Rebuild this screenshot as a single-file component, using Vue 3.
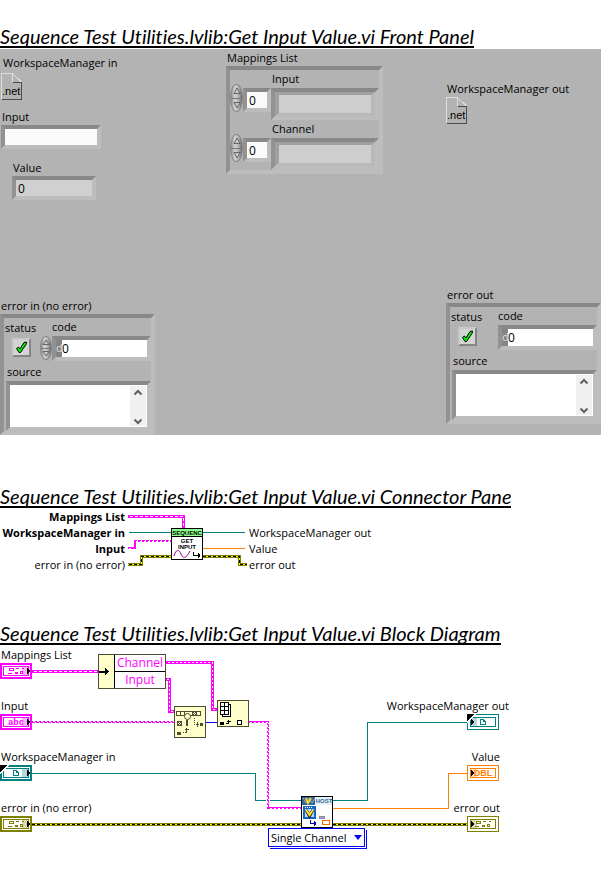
<script setup>
import { ref } from 'vue'

const inputText = ref('')
const subset = ref('Single Channel')

const mappingRows = ref([
  { id: 'map-input', name: 'Input', index: 0 },
  { id: 'map-channel', name: 'Channel', index: 0 },
])

const errorIn = ref({ id: 'ein', title: 'error in (no error)', control: true, ok: true, code: '0', source: '' })
const errorOut = ref({ id: 'eout', title: 'error out', control: false, ok: true, code: '0', source: '' })

const leftPins = [
  { text: 'Mappings List', required: true },
  { text: 'WorkspaceManager in', required: true },
  { text: 'Input', required: true },
  { text: 'error in (no error)', required: false },
]
const rightPins = ['WorkspaceManager out', 'Value', 'error out']

const PINK = '#ff00ff'
const TEAL = '#008080'
const OLIVE = '#808000'
const ORANGE = '#ff8000'

const terminals = [
  { label: 'Mappings List', x: 0, y: 663, lx: 1, anchor: 'start', color: PINK, kind: 'cluster', out: false },
  { label: 'Input', x: 0, y: 714, lx: 1, anchor: 'start', color: PINK, kind: 'abc', out: false },
  { label: 'WorkspaceManager in', x: 0, y: 765, lx: 1, anchor: 'start', color: TEAL, kind: 'ref', out: false },
  { label: 'error in (no error)', x: 0, y: 816, lx: 1, anchor: 'start', color: OLIVE, kind: 'cluster', out: false },
  { label: 'WorkspaceManager out', x: 467, y: 714, lx: 509, anchor: 'end', color: TEAL, kind: 'ref', out: true },
  { label: 'Value', x: 467, y: 765, lx: 500, anchor: 'end', color: ORANGE, kind: 'DBL', out: true },
  { label: 'error out', x: 467, y: 816, lx: 500, anchor: 'end', color: OLIVE, kind: 'cluster', out: true },
]

function step(row, by) {
  row.index = Math.max(0, Number(row.index) + by)
}
function stepCode(c, by) {
  c.code = String(Number(c.code) + by)
}
</script>

<template>
  <main class="doc">
    <h2 class="title">Sequence Test Utilities.lvlib:Get Input Value.vi Front Panel</h2>
    <section class="panel">
      <div class="col left">
        <div class="lbl in3">WorkspaceManager in</div>
        <svg class="net" width="21" height="27" viewBox="0 0 21 27" shape-rendering="crispEdges">
          <path d="M.5 26V.5H11.5L20.5 9" fill="none" stroke="#dedede" />
          <path d="M11.500 9.500H20.5V26.500H.5" fill="none" stroke="#4c4c4c" />
          <path d="M11.500 1V9" stroke="#dedede" />
          <text x="1" y="22" class="nettext">.net</text>
        </svg>
        <label class="lbl in2 gap-a" for="fp-input">Input</label>
        <input id="fp-input" v-model="inputText" class="sunk field wide in1" type="text" />
        <label class="lbl in13 gap-b" for="fp-value">Value</label>
        <input id="fp-value" class="sunk field readout in12" type="text" value="0" readonly />
      </div>

      <div class="col mid">
        <div class="lbl in1">Mappings List</div>
        <div class="sunk maps">
          <div v-for="row in mappingRows" :key="row.id" class="maprow">
            <label class="lbl maplbl" :for="row.id">{{ row.name }}</label>
            <div class="mapline">
              <span class="spin tall">
                <button type="button" :aria-label="row.name + ' up'" @click="step(row, 1)">
                  <svg width="8" height="8" viewBox="0 0 8 8"><path d="M1 6.500L4 1 7 6.500Z" fill="#c8c8c8" stroke="#666" /></svg>
                </button>
                <button type="button" :aria-label="row.name + ' down'" @click="step(row, -1)">
                  <svg width="8" height="8" viewBox="0 0 8 8"><path d="M1 1.500L4 7 7 1.500Z" fill="#c8c8c8" stroke="#666" /></svg>
                </button>
              </span>
              <input v-model="row.index" class="sunk field idx" type="text" :aria-label="row.name + ' index'" />
              <span class="sunk outer">
                <input :id="row.id" class="sunk field inner" type="text" readonly />
              </span>
            </div>
          </div>
        </div>
      </div>

      <div class="col right">
        <div class="lbl in1">WorkspaceManager out</div>
        <svg width="21" height="27" viewBox="0 0 21 27" shape-rendering="crispEdges">
          <path d="M.5 26V.5H11.5L20.5 9" fill="none" stroke="#dedede" />
          <path d="M11.500 9.500H20.5V26.500H.5" fill="none" stroke="#4c4c4c" />
          <path d="M11.500 1V9" stroke="#dedede" />
          <text x="1" y="22" class="nettext">.net</text>
        </svg>
      </div>

      <div v-for="c in [errorIn, errorOut]" :key="c.id" class="err" :class="c.id">
        <div class="lbl in1">{{ c.title }}</div>
        <div class="sunk errbox">
          <div class="errtop">
            <div class="status">
              <label class="lbl" :for="c.id + '-status'">status</label>
              <span class="led">
                <input :id="c.id + '-status'" v-model="c.ok" type="checkbox" />
                <svg v-if="c.ok" width="13" height="13" viewBox="0 0 13 13">
                  <path d="M1.500 7.500L3.500 6 5 8 9 1.500 11.500 1 11 3.500 5.500 11.500 4 11.500Z" fill="#00f000" stroke="#000" />
                </svg>
              </span>
            </div>
            <div class="code">
              <label class="lbl" :for="c.id + '-code'">code</label>
              <div class="codeline">
                <span v-if="c.control" class="spin small">
                  <button type="button" aria-label="code up" @click="stepCode(c, 1)">
                    <svg width="8" height="7" viewBox="0 0 8 7"><path d="M1 5.500L4 1 7 5.500Z" fill="#c8c8c8" stroke="#666" /></svg>
                  </button>
                  <button type="button" aria-label="code down" @click="stepCode(c, -1)">
                    <svg width="8" height="7" viewBox="0 0 8 7"><path d="M1 1.500L4 6 7 1.500Z" fill="#c8c8c8" stroke="#666" /></svg>
                  </button>
                </span>
                <span class="sunk codebox">
                  <span class="radix">d</span>
                  <input :id="c.id + '-code'" v-model="c.code" type="text" :readonly="!c.control" />
                </span>
              </div>
            </div>
          </div>
          <label class="lbl srclbl" :for="c.id + '-source'">source</label>
          <div class="sunk srcbox">
            <textarea :id="c.id + '-source'" v-model="c.source" :readonly="!c.control"></textarea>
            <span class="scroll">
              <button type="button" aria-label="scroll up">
                <svg width="10" height="7" viewBox="0 0 10 7"><path d="M1.500 5.500L5 2 8.500 5.500" fill="none" stroke="#606060" stroke-width="2" /></svg>
              </button>
              <button type="button" aria-label="scroll down">
                <svg width="10" height="7" viewBox="0 0 10 7"><path d="M1.500 1.500L5 5 8.500 1.500" fill="none" stroke="#606060" stroke-width="2" /></svg>
              </button>
            </span>
          </div>
        </div>
      </div>
    </section>

    <h2 class="title second">Sequence Test Utilities.lvlib:Get Input Value.vi Connector Pane</h2>
    <section class="pane">
      <ul class="pins ins">
        <li v-for="p in leftPins" :key="p.text" :class="{ req: p.required }">{{ p.text }}</li>
      </ul>
      <svg class="wires" width="120" height="64" viewBox="128 509 120 64" fill="none" shape-rendering="crispEdges">
        <path d="M128 516.500H183.500V528" stroke="#ff00ff" stroke-width="3" />
        <path d="M130 516.500H183.500V528" stroke="#fff" stroke-dasharray="3 2" />
        <path d="M129 532.500H171M203 532.500H245" stroke="#008080" />
        <path d="M128 548H135V541H171" stroke="#ff00ff" stroke-width="2" />
        <path d="M129 548.500H133M136 541.500H171" stroke="#fff" stroke-dasharray="2 2" />
        <path d="M137 540.500H171" stroke="#fff" stroke-dasharray="1 3" />
        <path d="M203 548.500H245" stroke="#ff8000" />
        <g>
          <path d="M128 564.500H141.500V556.500H171M203 556.500H239.500V564.500H247" stroke="#808000" stroke-width="3" />
          <path d="M128 564.500H141.500V556.500H171M203 556.500H239.500V564.500H247" stroke="#ffff00" />
          <path d="M129 564.500H141.500V556.500H171M203 556.500H239.500V564.500H247" stroke="#000" stroke-dasharray="3 2" />
        </g>
        <rect x="171.500" y="528.500" width="31" height="31" fill="#fff" stroke="#000" />
        <rect x="172" y="529" width="30" height="7" fill="#8cff8c" />
        <path d="M172 536.500H202" stroke="#000" />
        <text x="187" y="535" class="tiny" text-anchor="middle">SEQUENC</text>
        <text x="187" y="543" class="tiny" text-anchor="middle">GET</text>
        <text x="187" y="549" class="tiny" text-anchor="middle">INPUT</text>
        <path d="M174 556C176 549 179 549 181 554S186 559 190 551" stroke="#990099" shape-rendering="auto" />
        <path d="M193.500 552V555.500H200M198.500 553V558M199.500 554V557" stroke="#000" />
      </svg>
      <ul class="pins outs">
        <li v-for="p in rightPins" :key="p">{{ p }}</li>
      </ul>
    </section>

    <h2 class="title third">Sequence Test Utilities.lvlib:Get Input Value.vi Block Diagram</h2>
    <section class="diagram">
      <svg width="520" height="205" viewBox="0 645 520 205" fill="none" shape-rendering="crispEdges">
        <!-- wires -->
        <path d="M32 671.500H98" stroke="#ff00ff" stroke-width="3" />
        <path d="M34 671.500H98" stroke="#fff" stroke-dasharray="3 2" />
        <g stroke="#ff00ff" stroke-width="3">
          <path d="M166 662.500H212.500V709.500H217" />
          <path d="M166 679.500H169.500V711.500H174" />
        </g>
        <g stroke="#fff" stroke-dasharray="2 2">
          <path d="M168 662.500H212.500V709.500H217" />
          <path d="M167 679.500H169.500V711.500H174" />
        </g>
        <path d="M32 722H174M249 722H268V808H301" stroke="#ff00ff" stroke-width="2" />
        <path d="M33 721.500H174M250 722.500H267.500V807" stroke="#fff" stroke-dasharray="2 2" />
        <path d="M35 722.500H174M268.500 723V807" stroke="#fff" stroke-dasharray="1 3" />
        <path d="M270 808.500H301" stroke="#fff" stroke-dasharray="2 2" />
        <path d="M206 722.500H217" stroke="#0000ff" />
        <path d="M32 773.500H255.500V800.500H266M270 800.500H301M333 800.500H367.500V722.500H467" stroke="#008080" />
        <path d="M333 808.500H448.500V773.500H467" stroke="#ff8000" />
        <path d="M32 824.500H301M333 824.500H467" stroke="#808000" stroke-width="3" />
        <path d="M32 824.500H301M333 824.500H467" stroke="#ffff00" />
        <path d="M32 824.500H301M333 824.500H467" stroke="#000" stroke-dasharray="3 2" />

        <!-- unbundle by name -->
        <rect x="98.500" y="654.500" width="67" height="34" fill="#fff" stroke="#4d4d33" />
        <rect x="99" y="655" width="15" height="33" fill="#ffffcc" />
        <path d="M114.500 655V688M115 671.500H165" stroke="#000" />
        <path d="M99 672H106" stroke="#000" stroke-width="2" />
        <path d="M105 668L109 671.500 105 675Z" fill="#000" />
        <text x="140" y="667" class="dtext big" fill="#ff00ff" text-anchor="middle">Channel</text>
        <text x="140" y="684" class="dtext big" fill="#ff00ff" text-anchor="middle">Input</text>

        <!-- search array -->
        <rect x="174.500" y="706.500" width="31" height="31" fill="#ffffcc" stroke="#4d4d33" />
        <g stroke="#4d4d33">
          <rect x="176.500" y="711.500" width="24" height="4" />
          <path d="M180.500 712V715M184.500 712V715M192.500 712V715M196.500 712V715" />
          <path d="M193 712L196 715M196 712L193 715" />
          <rect x="177.500" y="721.500" width="4" height="4" />
          <path d="M178 722L181 725M181 722L178 725" />
          <circle cx="187.500" cy="716.500" r="3" fill="#ffffcc" shape-rendering="auto" />
          <path d="M187 720V726" stroke-width="2" />
          <path d="M194.500 718V724.500H199" stroke-dasharray="1 1" />
          <path d="M197.500 722V727M183 732.500H184M184.500 732.500H186.500V728M185 729.500H189" />
        </g>
        <rect x="200" y="723" width="3" height="3" fill="#4d4d33" />
        <rect x="177" y="732" width="4" height="3" fill="#4d4d33" />

        <!-- index array -->
        <rect x="217.500" y="700.500" width="31" height="26" fill="#ffffcc" stroke="#4d4d33" />
        <path d="M222.500 715V716.500H230.500V704.500H229" fill="#fff" stroke="#000" />
        <rect x="220.500" y="702.500" width="8" height="12" fill="#fff" stroke="#000" />
        <path d="M224.500 703V714M221 706.500H228M221 710.500H228" stroke="#000" />
        <rect x="220" y="722" width="4" height="3" fill="#000" />
        <path d="M226 723.500H228.500V720M227 721.500H231" stroke="#000" />
        <rect x="237.500" y="720.500" width="4" height="4" fill="#fff" stroke="#000" />

        <!-- host subVI -->
        <rect x="301.500" y="796.500" width="31" height="31" fill="#fff" stroke="#000" />
        <rect x="302" y="797" width="13" height="8" fill="#336699" />
        <rect x="315" y="797" width="17" height="8" fill="#e8f2fa" />
        <path d="M303 798L306 803 309 798M309 798L312 803 315 798" stroke="#9aa8a8" shape-rendering="auto" />
        <path d="M306 798L308 803 311 798" stroke="#ffd83b" stroke-width="2" shape-rendering="auto" />
        <text x="324" y="803" class="tiny" fill="#336699" text-anchor="middle">HOST</text>
        <rect x="303" y="806" width="13" height="13" fill="#1468c4" />
        <rect x="305" y="809" width="9" height="8" fill="#bcd8ec" />
        <path d="M305 807.500H313" stroke="#fff" stroke-dasharray="1 1" />
        <path d="M306 810L309.500 816 313 810" stroke="#222" stroke-width="3" shape-rendering="auto" />
        <path d="M306 810L309.500 815 313 810" stroke="#ffe030" stroke-width="2" shape-rendering="auto" />
        <rect x="319.500" y="816.500" width="5" height="2" fill="#a8a8d0" stroke="#8888b0" />
        <rect x="322.500" y="820.500" width="7" height="4" fill="#fff" stroke="#ff6600" />
        <path d="M310.500 820V823.500H316M314.500 821V826M315.500 822V825" stroke="#0000a0" />

        <!-- terminals -->
        <g v-for="t in terminals" :key="t.label">
          <text :x="t.lx" :y="t.y - 4" class="dtext" fill="#000" :text-anchor="t.anchor">{{ t.label }}</text>
          <g :transform="`translate(${t.x} ${t.y})`">
            <rect v-if="t.out" x=".5" y=".5" width="31" height="15" fill="#fff" :stroke="t.color" />
            <rect v-else x="1" y="1" width="30" height="14" fill="#fff" :stroke="t.color" stroke-width="2" />
            <rect x="3.500" y="3.500" width="25" height="9" :stroke="t.color" />
            <g v-if="t.kind === 'cluster'" :stroke="t.color">
              <rect x="9.500" y="5.500" width="4" height="2" />
              <rect x="20.500" y="8.500" width="2" height="2" />
              <rect x="15" y="9" width="3" height="2" :fill="t.color" stroke="none" />
              <path d="M16 5.500H19M22 5.500H24M8 10.500H12" />
            </g>
            <g v-else-if="t.kind === 'ref'" :stroke="t.color">
              <path d="M13.500 5.500H16.500L18.500 7.500V10.500H13.500ZM16.500 5.500V7.500H18.500" />
            </g>
            <text v-else-if="t.kind === 'abc'" x="16" y="11" class="mono" :fill="t.color" text-anchor="middle">abc</text>
            <text v-else x="16" y="11" class="dbl" :fill="t.color" text-anchor="middle">DBL</text>
            <rect :x="t.out ? 3 : 22" y="3" width="7" height="10" :fill="t.color" opacity=".3" />
            <path v-if="t.out" d="M4 5L8 8 4 11Z" fill="#000" />
            <path v-else d="M27 5L31 8 27 11Z" fill="#000" />
            <path v-if="t.kind === 'ref'" d="M0 0H8L0 8Z" fill="#000" />
            <path v-if="t.kind === 'ref'" d="M8.500 0L0 8.500" stroke="#fff" />
          </g>
        </g>
      </svg>
      <select v-model="subset" class="poly" aria-label="Host instance">
        <option>Single Channel</option>
        <option>All Channels</option>
      </select>
      <svg class="caret" width="8" height="5" viewBox="0 0 8 5"><path d="M0 0H8L4 5Z" fill="#0000ff" /></svg>
    </section>
  </main>
</template>

<style>
body {
  margin: 0;
  background: #fff;
}
</style>

<style scoped>
.doc {
  font-family: "Open Sans", "Noto Sans", sans-serif;
  font-size: 11px;
  line-height: 16px;
  color: #000;
  padding-top: 28px;
  overflow: hidden;
}
.doc * {
  box-sizing: border-box;
}
button, input, textarea, select {
  font: inherit;
  color: inherit;
  margin: 0;
  padding: 0;
  border: 0;
  border-radius: 0;
  background: none;
  outline: none;
  appearance: none;
}
.title {
  margin: 0;
  width: fit-content;
  height: 20px;
  overflow: hidden;
  border-bottom: 2px solid #000;
  font-family: Lato, sans-serif;
  font-size: 20px;
  font-style: italic;
  font-weight: 400;
  font-variant-ligatures: none;
  line-height: 17px;
  white-space: nowrap;
}
.second {
  margin-top: 53px;
}
.third {
  margin-top: 52px;
}
.lbl {
  display: block;
  height: 16px;
  white-space: nowrap;
}
.in1 { margin-left: 1px; }
.in2 { margin-left: 2px; }
.in3 { margin-left: 3px; }
.in12 { margin-left: 12px; }
.in13 { margin-left: 13px; }
.gap-a { margin-top: 9px; }
.gap-b { margin-top: 11px; }

.panel {
  margin-top: 1px;
  background: #b3b3b3;
  display: grid;
  grid-template-columns: 226fr 220fr 155fr;
  grid-template-rows: auto auto;
}
.col {
  grid-row: 1;
  display: flex;
  flex-direction: column;
  align-items: flex-start;
}
.left { padding-top: 6px; }
.mid { padding-top: 1px; }
.right { padding-top: 32px; }
.net { margin: 2px 0 0 1px; }
.nettext {
  font: 11px "Liberation Sans", sans-serif;
  fill: #000;
}
.sunk {
  border: 4px solid;
  border-color: #888 #bdbdbd #bdbdbd #929292;
}
.field {
  display: block;
  height: 24px;
  background: #fafafa;
  padding-left: 2px;
}
.wide { width: 100px; }
.readout {
  width: 84px;
  background: #d0d0d0;
}
.maps {
  width: 157px;
  height: 108px;
}
.maprow {
  height: 50px;
  padding-top: 1px;
}
.maplbl { margin-left: 42px; }
.mapline {
  display: flex;
  align-items: flex-start;
  padding-top: 1px;
}
.spin {
  flex: none;
  display: flex;
  flex-direction: column;
  border: 1px solid #888;
  border-radius: 50%;
  overflow: hidden;
  background: linear-gradient(90deg, #8c8c8c, #d4d4d4 35%, #b0b0b0 70%, #666);
}
.spin button {
  flex: 1;
  display: flex;
  align-items: center;
  justify-content: center;
}
.spin button + button { border-top: 1px solid #777; }
.tall {
  width: 13px;
  height: 28px;
  margin-top: -4px;
}
.small {
  width: 12px;
  height: 24px;
}
.idx { width: 28px; }
.outer {
  display: block;
  flex: 1;
  height: 32px;
}
.inner {
  width: 100%;
  height: 24px;
  background: #cecece;
  border-width: 3px 4px;
  border-color: #a0a0a0 #b9b9b9 #b9b9b9 #a0a0a0;
}
.err {
  grid-row: 2;
  align-self: start;
}
.ein {
  grid-column: 1;
  padding-top: 98px;
}
.eout {
  grid-column: 3;
  padding-top: 87px;
}
.errbox {
  width: 155px;
  height: 121px;
}
.errtop {
  display: flex;
  justify-content: space-between;
}
.status {
  padding: 2px 0 0 1px;
}
.led {
  display: grid;
  place-items: center;
  width: 19px;
  height: 19px;
  margin: 2px 0 0 7px;
  border: 2px solid;
  border-color: #c8c8c8 #858585 #858585 #c8c8c8;
  background: #d4d4d4;
}
.led input, .led svg { grid-area: 1 / 1; }
.led input {
  width: 15px;
  height: 15px;
}
.led svg { pointer-events: none; }
.code {
  width: 100px;
  padding-top: 1px;
}
.code .lbl { margin-left: 1px; }
.codeline {
  display: flex;
  justify-content: flex-end;
  margin-left: -12px;
  padding-top: 1px;
}
.codebox {
  display: flex;
  width: 99px;
  height: 25px;
  background: #fff;
}
.idx, .readout, .codebox {
  font-size: 12px;
}
.codebox input {
  width: 100%;
  min-width: 0;
}
.radix {
  flex: none;
  width: 6px;
  background: #858585;
  color: #ddd;
  font-size: 11px;
  text-align: center;
}
.srclbl { margin: 3px 0 0 3px; }
.srcbox {
  display: flex;
  height: 50px;
  margin: 1px 0 0 2px;
  background: #fff;
}
.srcbox textarea {
  flex: 1;
  min-width: 0;
  resize: none;
}
.scroll {
  display: flex;
  flex-direction: column;
  justify-content: space-between;
  width: 16px;
  margin: 1px;
  background: #f0f0f0;
}
.scroll button {
  display: flex;
  justify-content: center;
  padding: 3px 0 1px;
}

.pane {
  display: flex;
  align-items: flex-start;
  padding-top: 1px;
}
.pins {
  list-style: none;
  margin: 0;
  padding: 0;
  white-space: nowrap;
}
.ins {
  display: flex;
  flex-direction: column;
  align-items: flex-end;
  width: 125px;
}
.wires {
  flex: none;
  margin-left: 3px;
}
.req { font-weight: 700; }
.outs { padding: 16px 0 0 1px; }
.tiny {
  font: 700 6px "Liberation Sans", sans-serif;
}
text.tiny:not([fill]) { fill: #000; }
.diagram {
  position: relative;
}
.diagram > svg { display: block; }
.dtext { font: 11px "Open Sans", "Noto Sans", sans-serif; }
.big { font-size: 12px; }
.mono { font: 700 9px "Liberation Mono", monospace; }
.dbl { font: 700 9px "Liberation Sans", sans-serif; }
.poly {
  position: absolute;
  left: 268px;
  top: 183px;
  width: 97px;
  height: 19px;
  padding-left: 2px;
  border: 1px solid #0000ff;
  background: #fff;
  box-shadow: 1px 1px 0 #fff, 2px 2px 0 #0000ff;
}
.diagram .caret {
  position: absolute;
  left: 354px;
  top: 190px;
  pointer-events: none;
}
</style>
